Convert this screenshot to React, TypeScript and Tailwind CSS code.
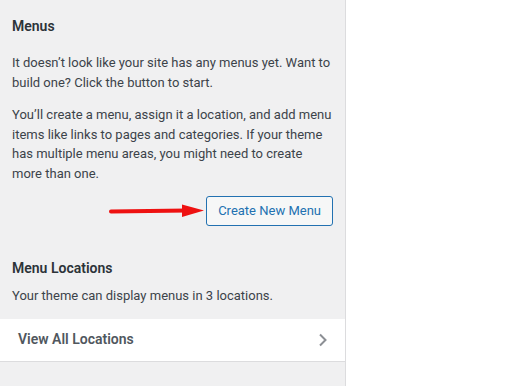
import React from 'react';

const App = () => {
  return (
    <div className="w-[524px] h-[386px] bg-white flex overflow-hidden" style={{ fontFamily: 'Roboto, "Open Sans", sans-serif' }}>
      <aside className="w-[346px] h-full bg-[#f0f0f1] border-r border-[#dcdcde] flex flex-col">
        <section className="px-3 pt-4">
          <h3 className="text-[14px] leading-5 font-semibold text-[#2c3338]">Menus</h3>
          <p className="mt-[17px] text-[13px] leading-[19.5px] text-[#3c434a]">
            It doesn’t look like your site has any menus yet. Want to build one? Click the button to start.
          </p>
          <p className="mt-[13px] text-[13px] leading-[19.5px] text-[#3c434a]">
            You’ll create a menu, assign it a location, and add menu items like links to pages and categories. If your theme has multiple menu areas, you might need to create more than one.
          </p>
          <div className="mt-[13px] flex justify-end items-center">
            {/* annotation arrow */}
            <svg width="96" height="16" viewBox="0 0 96 16" className="mr-[1px]">
              <path d="M2 8.5 L78 7.5" stroke="#ee1111" strokeWidth="4" strokeLinecap="round" />
              <path d="M73 1.5 L95 7.5 L73 14 Z" fill="#ee1111" />
            </svg>
            <button className="h-[30px] px-[11px] rounded-[3px] border border-[#2271b1] bg-[#f6f7f7] text-[13px] text-[#2271b1]">
              Create New Menu
            </button>
          </div>
        </section>

        <section className="px-3 mt-8">
          <h3 className="text-[14px] leading-5 font-semibold text-[#2c3338]">Menu Locations</h3>
          <p className="mt-[8px] text-[13px] leading-[19.5px] text-[#3c434a]">
            Your theme can display menus in 3 locations.
          </p>
        </section>

        <div className="mt-[13px] h-[43px] bg-white border-b border-[#dcdcde] flex items-center justify-between pl-[18px] pr-[17px]">
          <span className="text-[14px] font-semibold text-[#50575e]">View All Locations</span>
          <svg width="10" height="14" viewBox="0 0 10 14">
            <path d="M2 1.5 L7.5 7 L2 12.5" fill="none" stroke="#8c8f94" strokeWidth="2" />
          </svg>
        </div>
      </aside>
      <main className="flex-1 bg-white" />
    </div>
  );
};

export default App;
